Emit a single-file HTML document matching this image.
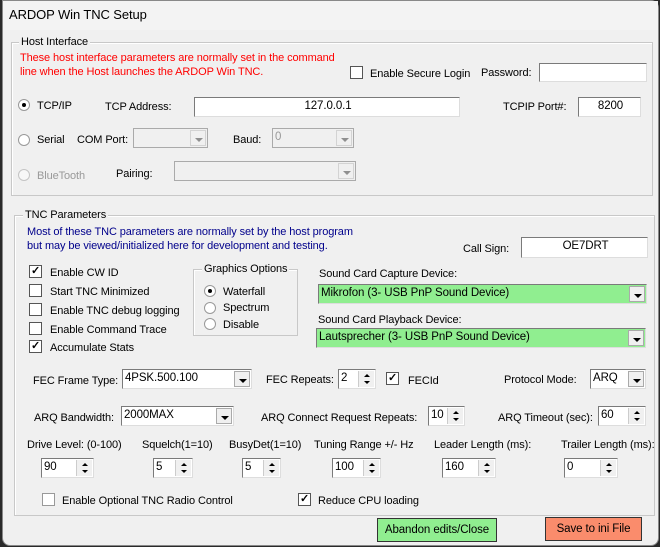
<!DOCTYPE html>
<html><head><style>
*{box-sizing:border-box;margin:0;padding:0}
body{width:660px;height:547px;background:#2a2a2a;font-family:"Liberation Sans",sans-serif;font-size:11px;letter-spacing:-0.1px;color:#000;position:relative;overflow:hidden}
.win{position:absolute;left:2px;top:0;width:657px;height:546px;background:#f0f0f0;border:1px solid #888;border-radius:0 8px 8px 8px}
.tb{position:absolute;left:0;top:0;width:100%;height:29px;background:#f3f3f3}
.a{position:absolute;white-space:nowrap;line-height:14px}
.grp{position:absolute;border:1px solid #c8c8c8;box-shadow:inset 1px 1px 0 #fff}
.gl{position:absolute;background:#f0f0f0;padding:0 2px;line-height:14px;white-space:nowrap}
.in{position:absolute;background:#fff;border:1px solid #7a7a7a;border-right-color:#ddd;border-bottom-color:#ddd;line-height:17px;padding-left:2px;white-space:nowrap;overflow:hidden;font-size:11.5px}
.cb{position:absolute;width:13px;height:13px;background:#fff;border:1px solid #555;font-size:11px;line-height:11px;text-align:center;font-weight:bold}
.rb{position:absolute;width:12px;height:12px;border-radius:50%;background:#fff;border:1px solid #999}
.rb.on::after{content:"";position:absolute;left:3px;top:3px;width:4px;height:4px;border-radius:50%;background:#000}
.dd{position:absolute;right:1px;top:1px;bottom:1px;width:16px;background:#f0f0f0;border:1px solid #aaa}
.dd::after{content:"";position:absolute;left:4px;top:7px;border-left:4px solid transparent;border-right:4px solid transparent;border-top:4px solid #000}
.sp{position:absolute;right:1px;top:1px;bottom:1px;width:16px;background:#f0f0f0;border-left:1px solid #ccc}
.sp::before{content:"";position:absolute;left:5px;top:3px;border-left:3px solid transparent;border-right:3px solid transparent;border-bottom:3px solid #000}
.sp::after{content:"";position:absolute;left:5px;bottom:3px;border-left:3px solid transparent;border-right:3px solid transparent;border-top:3px solid #000}
.dis{background:#f0f0f0;border-color:#aaa}
.btn{position:absolute;border:1px solid #333;text-align:center;line-height:22px;font-size:11.5px}
</style></head><body>
<div class="win">
<div class="tb"></div>
<div class="a" style="left:6px;top:7px;font-size:13px">ARDOP Win TNC Setup</div>

<div class="grp" style="left:8px;top:41px;width:642px;height:154px"></div>
<div class="gl" style="left:16px;top:34px">Host Interface</div>
<div class="a" style="left:17px;top:50px;color:#f00">These host interface parameters are normally set in the command</div>
<div class="a" style="left:17px;top:64px;color:#f00">line when the Host launches the ARDOP Win TNC.</div>
<div class="cb" style="left:347px;top:65px"></div>
<div class="a" style="left:367px;top:66px">Enable Secure Login</div>
<div class="a" style="left:478px;top:65px">Password:</div>
<div class="in" style="left:536px;top:62px;width:108px;height:19px"></div>

<div class="rb on" style="left:15px;top:98px"></div>
<div class="a" style="left:34px;top:98px">TCP/IP</div>
<div class="a" style="left:102px;top:99px">TCP Address:</div>
<div class="in" style="left:191px;top:96px;width:266px;height:20px;text-align:center">127.0.0.1</div>
<div class="a" style="left:500px;top:99px">TCPIP Port#:</div>
<div class="in" style="left:575px;top:96px;width:63px;height:20px;text-align:center">8200</div>

<div class="rb" style="left:15px;top:133px"></div>
<div class="a" style="left:34px;top:132px">Serial</div>
<div class="a" style="left:74px;top:132px">COM Port:</div>
<div class="in dis" style="left:130px;top:127px;width:75px;height:20px"><div class="dd" style="opacity:.4"></div></div>
<div class="a" style="left:230px;top:132px">Baud:</div>
<div class="in dis" style="left:269px;top:127px;width:82px;height:20px;color:#999">0<div class="dd" style="opacity:.4"></div></div>

<div class="rb" style="left:15px;top:168px;opacity:.5"></div>
<div class="a" style="left:34px;top:168px;color:#999">BlueTooth</div>
<div class="a" style="left:113px;top:166px">Pairing:</div>
<div class="in dis" style="left:171px;top:160px;width:182px;height:20px"><div class="dd" style="opacity:.4"></div></div>

<div class="grp" style="left:11px;top:214px;width:641px;height:301px"></div>
<div class="gl" style="left:20px;top:207px">TNC Parameters</div>
<div class="a" style="left:24px;top:224px;color:#00008b">Most of these TNC parameters are normally set by the host program</div>
<div class="a" style="left:24px;top:238px;color:#00008b">but may be viewed/initialized here for development and testing.</div>
<div class="a" style="left:460px;top:241px">Call Sign:</div>
<div class="in" style="left:518px;top:236px;width:127px;height:21px;text-align:center">OE7DRT</div>

<div class="cb" style="left:26px;top:264px">✓</div><div class="a" style="left:47px;top:265px">Enable CW ID</div>
<div class="cb" style="left:26px;top:283px"></div><div class="a" style="left:47px;top:284px">Start TNC Minimized</div>
<div class="cb" style="left:26px;top:302px"></div><div class="a" style="left:47px;top:303px">Enable TNC debug logging</div>
<div class="cb" style="left:26px;top:321px"></div><div class="a" style="left:47px;top:322px">Enable Command Trace</div>
<div class="cb" style="left:26px;top:339px">✓</div><div class="a" style="left:47px;top:340px">Accumulate Stats</div>

<div class="grp" style="left:190px;top:268px;width:105px;height:67px"></div>
<div class="gl" style="left:199px;top:261px">Graphics Options</div>
<div class="rb on" style="left:201px;top:284px"></div><div class="a" style="left:220px;top:284px">Waterfall</div>
<div class="rb" style="left:201px;top:301px"></div><div class="a" style="left:220px;top:300px">Spectrum</div>
<div class="rb" style="left:201px;top:317px"></div><div class="a" style="left:220px;top:317px">Disable</div>

<div class="a" style="left:316px;top:266px">Sound Card Capture Device:</div>
<div class="in" style="left:315px;top:283px;width:329px;height:20px;background:#90ee90">Mikrofon (3- USB PnP Sound Device)<div class="dd"></div></div>
<div class="a" style="left:315px;top:312px">Sound Card Playback Device:</div>
<div class="in" style="left:313px;top:327px;width:330px;height:20px;background:#90ee90">Lautsprecher (3- USB PnP Sound Device)<div class="dd"></div></div>

<div class="a" style="left:30px;top:373px">FEC Frame Type:</div>
<div class="in" style="left:119px;top:368px;width:130px;height:20px">4PSK.500.100<div class="dd"></div></div>
<div class="a" style="left:263px;top:372px">FEC Repeats:</div>
<div class="in" style="left:335px;top:368px;width:38px;height:20px">2<div class="sp"></div></div>
<div class="cb" style="left:383px;top:371px">✓</div><div class="a" style="left:405px;top:373px">FECId</div>
<div class="a" style="left:501px;top:372px">Protocol Mode:</div>
<div class="in" style="left:587px;top:368px;width:56px;height:20px">ARQ<div class="dd"></div></div>

<div class="a" style="left:31px;top:410px">ARQ Bandwidth:</div>
<div class="in" style="left:118px;top:405px;width:113px;height:20px">2000MAX<div class="dd"></div></div>
<div class="a" style="left:258px;top:410px">ARQ Connect Request Repeats:</div>
<div class="in" style="left:425px;top:405px;width:37px;height:20px">10<div class="sp"></div></div>
<div class="a" style="left:495px;top:410px">ARQ Timeout (sec):</div>
<div class="in" style="left:595px;top:405px;width:48px;height:20px">60<div class="sp"></div></div>

<div class="a" style="left:24px;top:437px">Drive Level: (0-100)</div>
<div class="a" style="left:139px;top:437px">Squelch(1=10)</div>
<div class="a" style="left:226px;top:437px">BusyDet(1=10)</div>
<div class="a" style="left:311px;top:437px">Tuning Range +/- Hz</div>
<div class="a" style="left:431px;top:437px">Leader Length (ms):</div>
<div class="a" style="left:558px;top:437px">Trailer Length (ms):</div>
<div class="in" style="left:38px;top:457px;width:53px;height:20px">90<div class="sp"></div></div>
<div class="in" style="left:150px;top:457px;width:40px;height:20px">5<div class="sp"></div></div>
<div class="in" style="left:239px;top:457px;width:39px;height:20px">5<div class="sp"></div></div>
<div class="in" style="left:329px;top:457px;width:49px;height:20px">100<div class="sp"></div></div>
<div class="in" style="left:439px;top:457px;width:54px;height:20px">160<div class="sp"></div></div>
<div class="in" style="left:561px;top:457px;width:54px;height:20px">0<div class="sp"></div></div>

<div class="cb" style="left:39px;top:492px;border-color:#999"></div><div class="a" style="left:59px;top:493px">Enable Optional TNC Radio Control</div>
<div class="cb" style="left:295px;top:492px">✓</div><div class="a" style="left:315px;top:493px">Reduce CPU loading</div>

<div class="btn" style="left:374px;top:517px;width:120px;height:24px;background:#90ee90">Abandon edits/Close</div>
<div class="btn" style="left:542px;top:516px;width:97px;height:24px;background:#fa8c6c">Save to ini File</div>
</div>
</body></html>
